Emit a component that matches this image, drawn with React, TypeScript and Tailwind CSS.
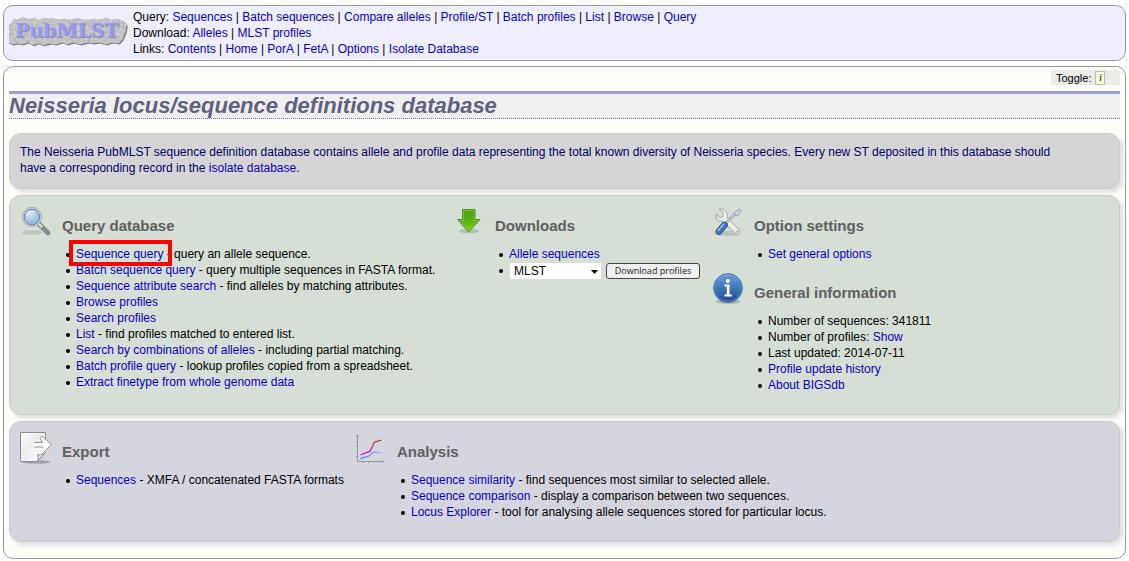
import type { ReactNode } from "react";

function A({ children }: { children: ReactNode }) {
  return (
    <a href="#" className="text-[#0a00bb] hover:underline">
      {children}
    </a>
  );
}

function LinkRow({ label, items }: { label: string; items: string[] }) {
  return (
    <div>
      {label}:{" "}
      {items.map((item, i) => (
        <span key={item}>
          {i > 0 && " | "}
          <A>{item}</A>
        </span>
      ))}
    </div>
  );
}

function Item({ children }: { children: ReactNode }) {
  return (
    <li className="relative before:absolute before:top-[7px] before:-left-[10px] before:h-1 before:w-1 before:rounded-full before:bg-black">
      {children}
    </li>
  );
}

function Section({ icon, title, children }: { icon: ReactNode; title: string; children: ReactNode }) {
  return (
    <section className="flex gap-[10px]">
      <div className="h-8 w-8 shrink-0">{icon}</div>
      <div className="pt-[10px]">
        <h2 className="mb-[10px] text-[15px] leading-5 font-bold text-[#606060]">{title}</h2>
        <ul className="ml-[14px]">{children}</ul>
      </div>
    </section>
  );
}

function Logo() {
  return (
    <svg width="120" height="34" viewBox="0 0 120 34" role="img" aria-label="PubMLST">
      <defs>
        <filter id="stone" x="-5%" y="-10%" width="110%" height="120%" colorInterpolationFilters="sRGB">
          <feTurbulence type="fractalNoise" baseFrequency="0.4" numOctaves="2" seed="4" result="n" />
          <feColorMatrix in="n" type="matrix" values="0.22 0 0 0 0.65  0.22 0 0 0 0.65  0.22 0 0 0 0.65  0 0 0 0 1" result="g" />
          <feComposite in="g" in2="SourceGraphic" operator="in" />
        </filter>
      </defs>
      <path
        d="M2 9l3-5 4 1 5-3 5 2 7-1 4 2 5-2 6 1 3-1 5 2 6-1 8 1 6-2 5 2 6 0 5-1 6 1 7-2 5 2 7-1 5 2 4 5-1 7-3 8-4 5-7-1-6 2-7-2-6 1-5-1-8 2-7-2-6 2-5-2-7 2-5-1-7 2-6-2-5 2-5-3-6 2-4-1-6 1-4-2-2-6 1-4-2-5z"
        transform="translate(1 2) scale(0.99 0.92)"
        fill="#777"
      />
      <path
        d="M2 9l3-5 4 1 5-3 5 2 7-1 4 2 5-2 6 1 3-1 5 2 6-1 8 1 6-2 5 2 6 0 5-1 6 1 7-2 5 2 7-1 5 2 4 5-1 7-3 8-4 5-7-1-6 2-7-2-6 1-5-1-8 2-7-2-6 2-5-2-7 2-5-1-7 2-6-2-5 2-5-3-6 2-4-1-6 1-4-2-2-6 1-4-2-5z"
        transform="translate(0 1) scale(0.99 0.92)"
        fill="#bbb"
        filter="url(#stone)"
      />
      <text x="7" y="24" className="text-[19px] font-bold" fontFamily="DejaVu Serif, serif" fill="#8f8fa8">
        PubMLST
      </text>
      <text x="6" y="23" className="text-[19px] font-bold" fontFamily="DejaVu Serif, serif" fill="#9999f8">
        PubMLST
      </text>
    </svg>
  );
}

function SearchIcon() {
  return (
    <svg width="32" height="32" viewBox="0 0 32 32">
      <defs>
        <radialGradient id="lens" cx="0.4" cy="0.3" r="0.8">
          <stop offset="0" stopColor="#d3e4f4" />
          <stop offset="0.6" stopColor="#a5c4e2" />
          <stop offset="1" stopColor="#84add6" />
        </radialGradient>
      </defs>
      <ellipse cx="12" cy="26.500" rx="10" ry="2.500" fill="#8a938a" opacity="0.3" />
      <path d="M19 18L28 27" stroke="#777" strokeWidth="4.600" strokeLinecap="round" />
      <path d="M19 18L28 27" stroke="#d8d8d8" strokeWidth="2.800" strokeLinecap="round" />
      <path d="M23 22L28 27" stroke="#888" strokeWidth="2.800" strokeLinecap="round" />
      <circle cx="12" cy="11" r="9.400" fill="#eee" stroke="#999" strokeWidth="1" />
      <circle cx="12" cy="11" r="7.800" fill="url(#lens)" stroke="#5580b3" strokeWidth="1" />
      <path d="M7 10a5.500 5.500 0 0 1 8-4" fill="none" stroke="#fff" strokeWidth="1.300" opacity="0.7" />
    </svg>
  );
}

function DownloadIcon() {
  return (
    <svg width="32" height="32" viewBox="0 0 32 32">
      <defs>
        <linearGradient id="arrow" x1="0" y1="0" x2="0" y2="1">
          <stop offset="0" stopColor="#4f9d17" />
          <stop offset="0.5" stopColor="#59b010" />
          <stop offset="1" stopColor="#7cd61c" />
        </linearGradient>
      </defs>
      <ellipse cx="16" cy="25" rx="10" ry="2.600" fill="#7d867d" opacity="0.35" />
      <path d="M9.500 3.500h12.500v10h5L15.700 26 4.500 13.500h5z" fill="url(#arrow)" stroke="#4c941a" />
      <path d="M10.500 4.500h10.500v10h4L15.700 24.500 6.800 14.500h3.700z" fill="none" stroke="#93da4b" strokeWidth="0.8" opacity="0.7" />
    </svg>
  );
}

function ToolsIcon() {
  return (
    <svg width="32" height="32" viewBox="0 0 32 32">
      <ellipse cx="15" cy="27.500" rx="13" ry="2.400" fill="#7d867d" opacity="0.3" />
      <path
        d="M7.500 3.200L11 6.700v3.500L8.500 12 4.500 8.300C3.200 12.500 6 16 10.500 15.200L23.500 27.600c2.500 2.200 6-.8 3.800-3.500L15 11.500C16.200 6.500 12.500 2 7.500 3.200z"
        fill="#ededed"
        stroke="#a2a2a2"
      />
      <circle cx="25.400" cy="25.700" r="1" fill="#999" />
      <path d="M13 18L24 7" stroke="#8b9aaa" strokeWidth="2.600" />
      <path d="M13 18L24 7" stroke="#ccd7e1" strokeWidth="1.200" />
      <path d="M22 8l1-2.500 4.500-2.500 1.700 1.700-2.700 4.300-2.500 1z" fill="#c2d0dd" stroke="#8d9db0" strokeWidth="0.9" />
      <path d="M12.500 19L7 25.500" stroke="#274f8e" strokeWidth="6.600" strokeLinecap="round" />
      <path d="M12.500 19L7 25.500" stroke="#4478be" strokeWidth="5" strokeLinecap="round" />
      <path d="M11.300 18.300L6 24.500" stroke="#a5c5ec" strokeWidth="1.300" strokeLinecap="round" />
    </svg>
  );
}

function InfoIcon() {
  return (
    <svg width="32" height="32" viewBox="0 0 32 32">
      <defs>
        <linearGradient id="ball" x1="0" y1="0" x2="0" y2="1">
          <stop offset="0" stopColor="#6ea0d6" />
          <stop offset="0.5" stopColor="#3f74b8" />
          <stop offset="1" stopColor="#1f4b8d" />
        </linearGradient>
      </defs>
      <ellipse cx="16" cy="28.500" rx="12" ry="2.400" fill="#6d766d" opacity="0.4" />
      <circle cx="16" cy="15" r="14.400" fill="url(#ball)" stroke="#4673ae" strokeWidth="0.9" />
      <circle cx="16" cy="15" r="13.300" fill="none" stroke="#8cb5e2" strokeWidth="0.8" opacity="0.5" />
      <circle cx="15.800" cy="8" r="2" fill="#fff" />
      <path d="M12.500 11.500h5v10h2.300v2h-7.300v-2h2.300v-8h-2.300z" fill="#fff" />
    </svg>
  );
}

function ExportIcon() {
  return (
    <svg width="32" height="32" viewBox="0 0 32 32">
      <defs>
        <linearGradient id="sheet" x1="0" y1="0" x2="1" y2="1">
          <stop offset="0" stopColor="#fff" />
          <stop offset="0.4" stopColor="#ededed" />
          <stop offset="1" stopColor="#fff" />
        </linearGradient>
      </defs>
      <ellipse cx="16" cy="30" rx="14" ry="1.800" fill="#70707a" opacity="0.5" />
      <path d="M.5.500h25v20L17 29.500H.5z" fill="url(#sheet)" stroke="#8d8d8d" />
      <path d="M17 29.500c2-2 1-5 .5-7 2 1 5 .5 8-2z" fill="#f7f7f7" stroke="#8d8d8d" />
      <path d="M14.500 10.500h8l-2.500-4 2-2.500 9.500 8.500-7.500 9-2.500-2.200 1.500-4.300h-8.500z" fill="#fff" />
      <path d="M14.500 10.500h8l-2.500-4 2-2.500 9.500 8.500-9.500 9.500M14.500 15h8.500" fill="none" stroke="#8d8d8d" />
    </svg>
  );
}

function ChartIcon() {
  return (
    <svg width="32" height="32" viewBox="0 0 32 32">
      <defs>
        <linearGradient id="rise" x1="0" y1="1" x2="1" y2="0">
          <stop offset="0.200" stopColor="#d30be0" />
          <stop offset="0.600" stopColor="#c53c68" />
          <stop offset="1" stopColor="#cf4a10" />
        </linearGradient>
        <linearGradient id="low" x1="0" y1="0" x2="1" y2="0">
          <stop offset="0" stopColor="#2f6fe8" />
          <stop offset="1" stopColor="#a5ccfa" />
        </linearGradient>
      </defs>
      <path d="M2.500 3v26.500H29M1 9.500h2M1 14.500h2M1 19.500h2M1 24.500h2M8.500 29v2M13.500 29v2M18.500 29v2M23.500 29v2" fill="none" stroke="#9a9aa2" />
      <path d="M2.500 2L1 5h3zM30 29.500L27 28v3z" fill="#9a9aa2" />
      <path d="M5.500 23L15 19.200 19.500 10 26.500 8.200" fill="none" stroke="url(#rise)" strokeWidth="1.300" />
      <path d="M5.500 26.500L14 24l5-4 7.500 1" fill="none" stroke="url(#low)" strokeWidth="1.300" />
    </svg>
  );
}

export default function App() {
  return (
    <div className="px-[3px] pt-[5px] pb-[2px] font-['Liberation_Sans',Arial,sans-serif] text-[12px] leading-4 text-black">
      <header className="mb-[5px] flex gap-1 rounded-[10px] border border-[#999] bg-[#eeeeff] py-[3px] pl-[5px]">
        <div className="pt-[5px]">
          <Logo />
        </div>
        <nav>
          <LinkRow
            label="Query"
            items={["Sequences", "Batch sequences", "Compare alleles", "Profile/ST", "Batch profiles", "List", "Browse", "Query"]}
          />
          <LinkRow label="Download" items={["Alleles", "MLST profiles"]} />
          <LinkRow label="Links" items={["Contents", "Home", "PorA", "FetA", "Options", "Isolate Database"]} />
        </nav>
      </header>

      <main className="rounded-[10px] border border-[#999] bg-[#fcfef8] px-[5px] pt-[3px] pb-4">
        <div className="flex justify-end">
          <div className="flex h-[15px] w-[69px] items-center gap-1 bg-[#ebebe8] pl-[5px] text-[11px]">
            Toggle:
            <button className="h-[14px] w-[10px] border border-[#bbb] bg-[#ffffd5] font-['Liberation_Serif',serif] leading-[11px] italic">
              i
            </button>
          </div>
        </div>

        <h1 className="mt-[6px] mb-[14px] border-t-3 border-b border-t-[#a0a0d0] border-b-[#7070b0] bg-[#f0f0f0] text-[22px] leading-6 font-bold text-[#606080] italic [border-bottom-style:dotted]">
          Neisseria locus/sequence definitions database
        </h1>

        {/* Intro */}
        <div className="mb-[6px] rounded-[12px] border border-[#ccc] bg-[#d5d5d5] pt-[10px] pr-[60px] pb-3 pl-[10px] text-[#000066] shadow-[3px_3px_5px_#ddd]">
          <p>
            The Neisseria PubMLST sequence definition database contains allele and profile data representing the total known
            diversity of Neisseria species. Every new ST deposited in this database should have a corresponding record in the{" "}
            <A>isolate database</A>.
          </p>
        </div>

        {/* Queries, downloads and options */}
        <div className="mb-[6px] flex rounded-[12px] border border-[#ccc] bg-[#d5dfd5] px-[10px] pt-[10px] pb-[21px] shadow-[3px_3px_5px_#ddd]">
          <div className="w-[433px] shrink-0">
            <Section icon={<SearchIcon />} title="Query database">
              <Item>
                <A>Sequence query</A> - query an allele sequence.
                <span className="pointer-events-none absolute -top-[6px] -left-[7px] h-[26px] w-[103px] border-4 border-[#ff0000]" />
              </Item>
              <Item><A>Batch sequence query</A> - query multiple sequences in FASTA format.</Item>
              <Item><A>Sequence attribute search</A> - find alleles by matching attributes.</Item>
              <Item><A>Browse profiles</A></Item>
              <Item><A>Search profiles</A></Item>
              <Item><A>List</A> - find profiles matched to entered list.</Item>
              <Item><A>Search by combinations of alleles</A> - including partial matching.</Item>
              <Item><A>Batch profile query</A> - lookup profiles copied from a spreadsheet.</Item>
              <Item><A>Extract finetype from whole genome data</A></Item>
            </Section>
          </div>
          <div className="w-[259px] shrink-0">
            <Section icon={<DownloadIcon />} title="Downloads">
              <Item><A>Allele sequences</A></Item>
              <Item>
                <div className="flex items-center gap-1">
                  <div className="relative">
                    <select aria-label="Scheme" className="block h-[18px] w-[93px] appearance-none rounded-[2px] border border-[#ddd] bg-white pl-1 leading-4">
                      <option>MLST</option>
                    </select>
                    <svg width="7" height="4" viewBox="0 0 7 4" className="pointer-events-none absolute top-2 right-1">
                      <path d="M0 0h7L3.500 4z" fill="#000" />
                    </svg>
                  </div>
                  <button className="h-4 w-[94px] rounded-[3px] border border-[#444] bg-[#f0f0f0] font-['Open_Sans',sans-serif] text-[9px] leading-[14px] whitespace-nowrap text-[#222]">
                    Download profiles
                  </button>
                </div>
              </Item>
            </Section>
          </div>
          <div className="flex flex-col gap-[11px]">
            <Section icon={<ToolsIcon />} title="Option settings">
              <Item><A>Set general options</A></Item>
            </Section>
            <Section icon={<InfoIcon />} title="General information">
              <Item>Number of sequences: 341811</Item>
              <Item>Number of profiles: <A>Show</A></Item>
              <Item>Last updated: 2014-07-11</Item>
              <Item><A>Profile update history</A></Item>
              <Item><A>About BIGSdb</A></Item>
            </Section>
          </div>
        </div>

        {/* Export and analysis */}
        <div className="flex rounded-[12px] border border-[#ccc] bg-[#d5d5df] px-[10px] pt-[10px] pb-[21px] shadow-[3px_3px_5px_#ddd]">
          <div className="w-[335px] shrink-0">
            <Section icon={<ExportIcon />} title="Export">
              <Item><A>Sequences</A> - XMFA / concatenated FASTA formats</Item>
            </Section>
          </div>
          <Section icon={<ChartIcon />} title="Analysis">
            <Item><A>Sequence similarity</A> - find sequences most similar to selected allele.</Item>
            <Item><A>Sequence comparison</A> - display a comparison between two sequences.</Item>
            <Item><A>Locus Explorer</A> - tool for analysing allele sequences stored for particular locus.</Item>
          </Section>
        </div>
      </main>
    </div>
  );
}
